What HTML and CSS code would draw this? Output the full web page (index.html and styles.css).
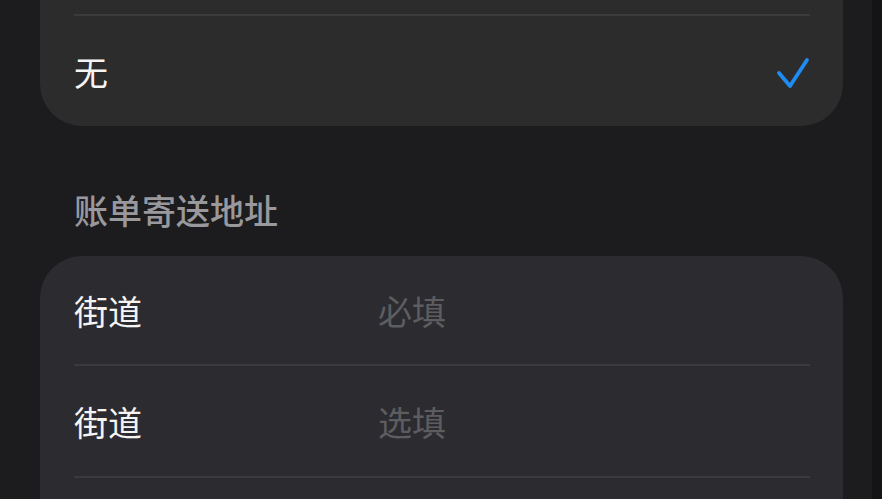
FILE: index.html
```html
<!DOCTYPE html>
<html lang="zh-CN">
<head>
  <meta charset="UTF-8">
  <title>账单寄送地址</title>
  <link rel="stylesheet" href="styles.css">
</head>
<body>
  <div class="screen">
    <div class="card card-top">
      <div class="row"></div>
      <div class="row">
        <span class="label">无</span>
        <svg class="check" width="34" height="34" viewBox="0 0 34 34">
          <polyline points="3,18 14,31 31,5" fill="none" stroke="#1f8cf2" stroke-width="3.8" stroke-linecap="round" stroke-linejoin="round"/>
        </svg>
      </div>
    </div>

    <div class="section-title">账单寄送地址</div>

    <div class="card card-address">
      <div class="row">
        <span class="label field">街道</span>
        <span class="placeholder">必填</span>
      </div>
      <div class="row">
        <span class="label field">街道</span>
        <span class="placeholder">选填</span>
      </div>
      <div class="row"></div>
    </div>
  </div>
</body>
</html>
```

FILE: styles.css
```css
body {
  margin: 0;
  background: #141416;
  font-family: "Noto Sans CJK SC", "Noto Sans", sans-serif;
  overflow: hidden;
}
.screen {
  width: 872px;
  height: 499px;
  background: #1c1c1e;
  padding: 0 29px 0 40px;
  box-sizing: border-box;
  overflow: hidden;
}
.card {
  background: #2c2c2e;
  border-radius: 42px;
  padding: 0 33px 0 34px;
}
.card-top {
  background: #2c2c2d;
  margin-top: -95px;
}
.card-address {
  background: #2c2b2f;
}
.row {
  height: 110px;
  display: flex;
  align-items: center;
  border-top: 2px solid #3b3b3e;
}
.row:first-child {
  border-top: none;
}
.card-top .row:first-child {
  height: 109px;
}
.label {
  color: #f4f4f5;
  font-size: 34px;
  flex: 1;
}
.label.field {
  flex: 0 0 304px;
}
.check {
  margin-right: 0;
  margin-top: 1px;
}
.placeholder {
  color: #5d5d61;
  font-size: 34px;
}
.section-title {
  color: #98989d;
  font-size: 34px;
  font-weight: 500;
  padding: 64px 0 26px 34px;
  line-height: 40px;
}
.card-address .row:first-child {
  height: 108px;
}
```
